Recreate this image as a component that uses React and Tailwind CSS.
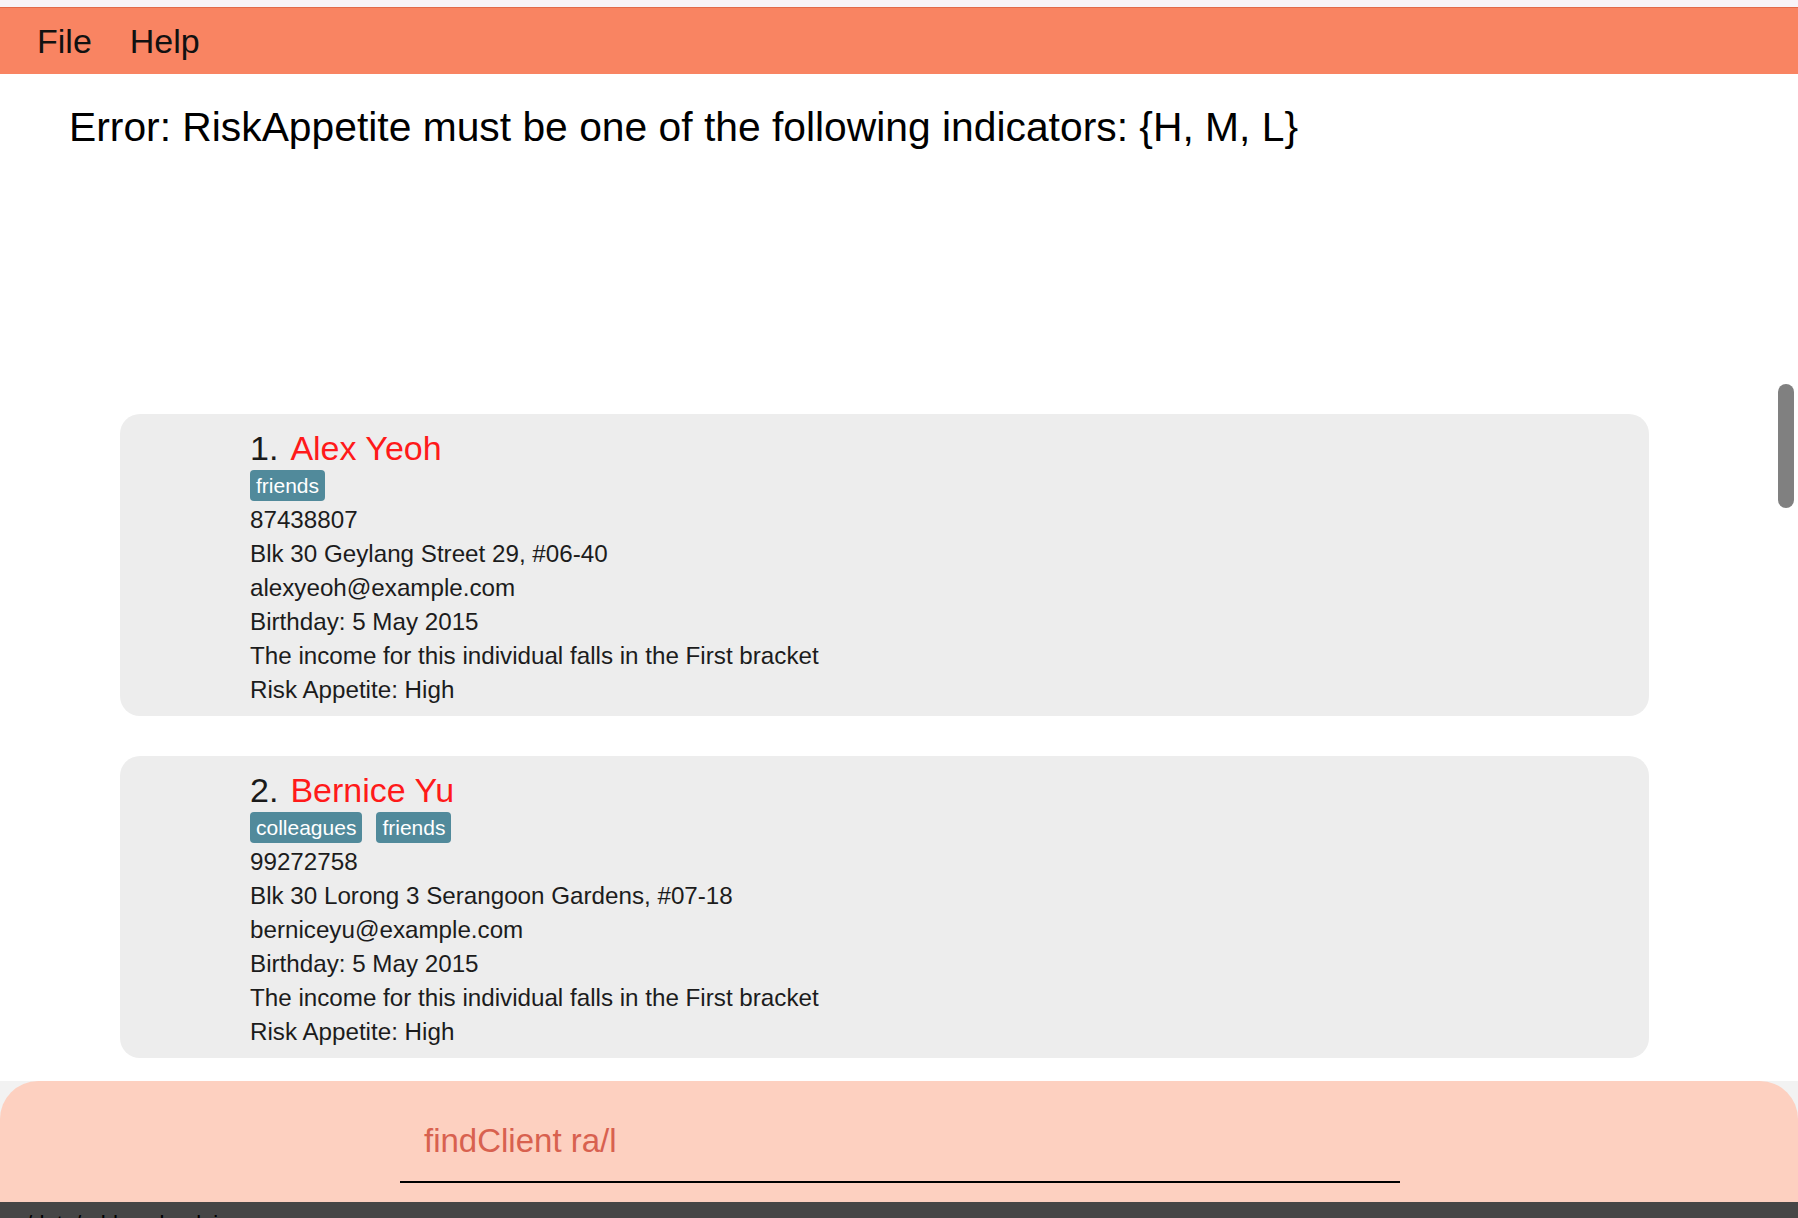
import React from "react";

const people = [
  {
    n: 1,
    name: "Alex Yeoh",
    tags: ["friends"],
    phone: "87438807",
    address: "Blk 30 Geylang Street 29, #06-40",
    email: "alexyeoh@example.com",
  },
  {
    n: 2,
    name: "Bernice Yu",
    tags: ["colleagues", "friends"],
    phone: "99272758",
    address: "Blk 30 Lorong 3 Serangoon Gardens, #07-18",
    email: "berniceyu@example.com",
  },
];

function Card({ p }) {
  return (
    <div className="w-[1529px] h-[302px] rounded-[20px] bg-[#ededed] pl-[130px] pt-[13px]">
      <div className="flex items-center h-[42px] text-[34px] leading-[42px]">
        <span className="text-[#1a1a1a]">{p.n}.</span>
        <span className="ml-[12px] text-[#ff1a1a]">{p.name}</span>
      </div>
      <div className="flex items-center gap-[14px] h-[31px] mt-[1px]">
        {p.tags.map((t) => (
          <span
            key={t}
            className="h-[31px] px-[6px] rounded-[4px] bg-[#518a9b] text-white text-[21px] leading-[31px]"
          >
            {t}
          </span>
        ))}
      </div>
      <div className="mt-[2px] text-[24.2px] leading-[34px] text-[#1c1c1c]">
        <div>{p.phone}</div>
        <div>{p.address}</div>
        <div>{p.email}</div>
        <div>Birthday: 5 May 2015</div>
        <div>The income for this individual falls in the First bracket</div>
        <div>Risk Appetite: High</div>
      </div>
    </div>
  );
}

export default function App() {
  return (
    <div
      className="relative w-[1798px] h-[1218px] overflow-hidden flex flex-col bg-white"
      style={{ fontFamily: '"Liberation Sans", Arial, sans-serif' }}
    >
      <div className="h-[7px] bg-[#f8f4f8] shrink-0" />
      <div className="h-[67px] shrink-0 bg-[#f98462] border-t border-[#e26a4a] flex items-center text-[34px] text-[#111]">
        <span className="ml-[37px]">File</span>
        <span className="ml-[38px]">Help</span>
      </div>
      <div className="h-[291px] shrink-0 pt-[29px] pl-[69px]">
        <div className="text-[40.8px] leading-[48px] text-black">
          Error: RiskAppetite must be one of the following indicators: {"{H, M, L}"}
        </div>
      </div>
      <div className="flex-1 flex flex-col gap-[40px] pt-[49px] pl-[120px]">
        {people.map((p) => (
          <Card key={p.n} p={p} />
        ))}
      </div>
      <div className="h-[121px] shrink-0 bg-[#f2f2f2]">
        <div className="h-full rounded-t-[38px] bg-[#fdd0c0] flex flex-col pl-[400px]">
          <div className="pt-[40px] pl-[24px] text-[33px] leading-[40px] text-[#d8614f]">
            findClient ra/l
          </div>
          <div className="mt-[20px] w-[1000px] h-[2px] bg-black" />
        </div>
      </div>
      <div className="h-[16px] shrink-0 bg-[#464646] overflow-hidden pl-[20px]">
        <div className="pt-[9px] text-[22px] leading-[26px] text-black">./data/addressbook.json</div>
      </div>
      <div className="absolute left-[1778px] top-[384px] w-[16px] h-[124px] rounded-full bg-[#808080]" />
    </div>
  );
}
